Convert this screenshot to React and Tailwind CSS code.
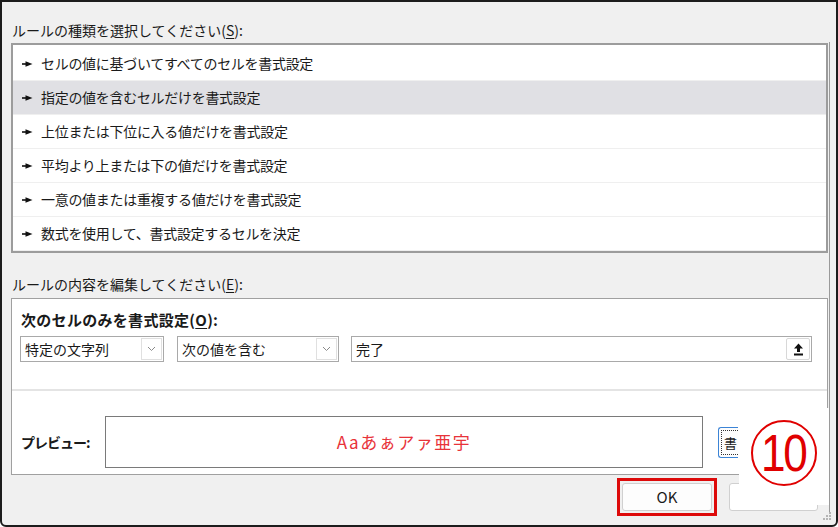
import React from "react";

const rules = [
  "セルの値に基づいてすべてのセルを書式設定",
  "指定の値を含むセルだけを書式設定",
  "上位または下位に入る値だけを書式設定",
  "平均より上または下の値だけを書式設定",
  "一意の値または重複する値だけを書式設定",
  "数式を使用して、書式設定するセルを決定",
];

const font = { fontFamily: '"Noto Sans CJK JP", "Noto Sans", sans-serif' };

const Pointer = () => (
  <svg width="11" height="8" viewBox="0 0 11 8" className="shrink-0">
    <rect x="0" y="3.2" width="5" height="1.6" fill="#111" />
    <polygon points="3.5,1.2 10.5,4 3.5,6.8" fill="#111" />
  </svg>
);

const Chevron = () => (
  <span className="flex h-[22px] w-[21px] items-center justify-center border border-[#e0e0e0] bg-white">
    <svg width="9" height="6" viewBox="0 0 9 6">
      <polyline points="1,1 4.5,4.5 8,1" fill="none" stroke="#8a8a8a" strokeWidth="1" />
    </svg>
  </span>
);

const Select = ({ label, width }) => (
  <div
    className={`flex h-[26px] items-center justify-between border border-[#a9a9a9] bg-white pl-[4px] pr-[1px] ${width}`}
  >
    <span className="text-[14px] leading-none text-[#1a1a1a]">{label}</span>
    <Chevron />
  </div>
);

export default function App() {
  return (
    <div
      style={font}
      className="relative h-[527px] w-[838px] overflow-hidden rounded-b-[6px] border-2 border-[#1c1c1c] bg-[#f0f0f0] text-[#1a1a1a]"
    >
      {/* rule type list */}
      <div className="pl-[10px] pt-[18px] text-[14px] leading-[20px]">
        ルールの種類を選択してください(<span className="underline underline-offset-2">S</span>):
      </div>
      <div className="ml-[9px] mr-[8px] mt-[3px] h-[210px] border-2 border-[#9c9c9c] bg-white pt-[2px]">
        {rules.map((r, i) => (
          <div
            key={i}
            className={`flex h-[34px] items-center gap-[8px] border-b border-[#efefef] pl-[9px] text-[14px] tracking-[-0.3px] ${
              i === 1 ? "bg-[#e0e0e4]" : ""
            }`}
          >
            <Pointer />
            <span>{r}</span>
          </div>
        ))}
      </div>

      {/* rule description */}
      <div className="mt-[21px] pl-[10px] text-[14px] leading-[20px]">
        ルールの内容を編集してください(<span className="underline underline-offset-2">E</span>):
      </div>
      <div className="ml-[9px] mr-[8px] mt-[4px] h-[177px] border border-[#a0a0a0] bg-white">
        <div className="pl-[9px] pt-[11px] text-[15px] font-bold leading-[20px] tracking-[0.3px]">
          次のセルのみを書式設定(<span className="underline underline-offset-2">O</span>):
        </div>
        <div className="mt-[6px] flex items-center pl-[8px]">
          <Select label="特定の文字列" width="w-[144px]" />
          <div className="w-[13px]" />
          <Select label="次の値を含む" width="w-[162px]" />
          <div className="w-[12px]" />
          <div className="flex h-[26px] w-[461px] items-center justify-between border border-[#a9a9a9] bg-white pl-[4px] pr-[1px]">
            <span className="text-[14px] leading-none">完了</span>
            <span className="flex h-[22px] w-[24px] items-center justify-center rounded-[2px] border border-[#d8d8d8] bg-white">
              <svg width="11" height="13" viewBox="0 0 11 13">
                <polygon points="5.5,0.5 10,5.5 7,5.5 7,9 4,9 4,5.5 1,5.5" fill="#111" />
                <rect x="1" y="10.5" width="9" height="2" fill="#111" />
              </svg>
            </span>
          </div>
        </div>
        <div className="mt-[27px] h-[2px] bg-[#e4e4e4]" />
        <div className="mt-[25px] flex items-center pl-[9px]">
          <span className="w-[84px] text-[14px] font-bold tracking-[-1px]">プレビュー:</span>
          <div className="flex h-[52px] w-[598px] items-center justify-center border border-[#7a7a7a] bg-white text-[17px] tracking-[1.5px] text-[#e8333a]">
            Aaあぁアァ亜宇
          </div>
          {/* format button, only its left edge shows beside the marker */}
          <button className="ml-[15px] flex h-[31px] w-[20px] items-center justify-start rounded-l-[3px] border border-r-0 border-[#3c84d6] bg-[#fdfdfd] py-[2px] pl-[2px]">
            <span className="flex h-full w-full items-center justify-start border border-r-0 border-dotted border-[#333] pl-[2px] text-[13px] leading-none">
              書
            </span>
          </button>
        </div>
      </div>

      {/* dialog buttons */}
      <div className="mt-[3px] flex items-start justify-end gap-[12px] pr-[18px]">
        <div className="border-[3px] border-[#dd0a0a] p-[2px]">
          <button className="flex h-[28px] w-[90px] items-center justify-center rounded-[3px] border border-[#d0d0d0] bg-[#fdfdfd] text-[15px]">
            OK
          </button>
        </div>
        <button className="mt-[5px] flex h-[28px] w-[89px] items-center justify-center rounded-[3px] border border-[#d0d0d0] bg-white text-[15px]" />
      </div>

      {/* right edge of the window frame */}
      <div className="absolute right-[6px] top-[40px] h-[470px] w-[1px] bg-[#9a9a9a]" />

      {/* step marker */}
      <div className="absolute left-[737px] top-[406px] flex h-[97px] w-[90px] items-center justify-center bg-white">
        <div
          className="mt-[-7px] flex h-[66px] w-[66px] items-center justify-center rounded-full border-2 border-[#e00000] text-[52px] leading-none tracking-[-3px] text-[#e00000]"
          style={{ fontFamily: '"Liberation Sans Narrow", "Liberation Sans", sans-serif' }}
        >
          <span className="scale-x-[0.85] pr-[3px]">10</span>
        </div>
      </div>

      {/* resize grip */}
      <svg className="absolute bottom-[4px] right-[4px]" width="10" height="10" viewBox="0 0 10 10">
        {[
          [8, 2],
          [5, 5],
          [8, 5],
          [2, 8],
          [5, 8],
          [8, 8],
        ].map(([x, y], i) => (
          <rect key={i} x={x - 1} y={y - 1} width="2" height="2" fill="#b5b5b5" />
        ))}
      </svg>
    </div>
  );
}
